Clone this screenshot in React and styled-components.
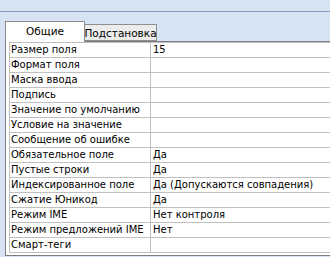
import React from "react";
import styled, { createGlobalStyle } from "styled-components";

const GlobalStyle = createGlobalStyle`
  html, body {
    margin: 0;
    padding: 0;
    background: #d5e3f3;
  }
`;

const rows = [
  ["Размер поля", "15"],
  ["Формат поля", ""],
  ["Маска ввода", ""],
  ["Подпись", ""],
  ["Значение по умолчанию", ""],
  ["Условие на значение", ""],
  ["Сообщение об ошибке", ""],
  ["Обязательное поле", "Да"],
  ["Пустые строки", "Да"],
  ["Индексированное поле", "Да (Допускаются совпадения)"],
  ["Сжатие Юникод", "Да"],
  ["Режим IME", "Нет контроля"],
  ["Режим предложений IME", "Нет"],
  ["Смарт-теги", ""],
];

function App() {
  return (
    <Page>
      <GlobalStyle />
      <TopBar />
      <TabStrip>
        <Tab active>Общие</Tab>
        <Tab>Подстановка</Tab>
      </TabStrip>
      <Panel>
        <Grid>
          {rows.map(([label, value]) => (
            <Row key={label}>
              <Label>{label}</Label>
              <Value>{value}</Value>
            </Row>
          ))}
        </Grid>
      </Panel>
    </Page>
  );
}

export default App;

const Page = styled.div`
  width: 330px;
  height: 257px;
  overflow: hidden;
  background: #d5e3f3;
  font-family: "DejaVu Sans", Tahoma, sans-serif;
  font-size: 10px;
  color: #000;
`;

const TopBar = styled.div`
  height: 11px;
  border-bottom: 1px solid #7f9cc0;
`;

const TabStrip = styled.div`
  display: flex;
  align-items: flex-end;
  padding: 9px 0 0 5px;
  height: 20px;
  position: relative;
  z-index: 1;
`;

const Tab = styled.div`
  box-sizing: border-box;
  height: ${({ active }) => (active ? "21px" : "17px")};
  width: ${({ active }) => (active ? "80px" : "73px")};
  margin-left: ${({ active }) => (active ? "0" : "-1px")};
  margin-bottom: ${({ active }) => (active ? "-1px" : "0")};
  border: 1px solid #8e8f8f;
  border-bottom: ${({ active }) => (active ? "none" : "1px solid #8e8f8f")};
  background: ${({ active }) => (active ? "#fff" : "#ececec")};
  display: flex;
  align-items: ${({ active }) => (active ? "flex-start" : "center")};
  justify-content: center;
  padding-top: ${({ active }) => (active ? "3px" : "0")};
  font-size: 10.5px;
  white-space: nowrap;
`;

const Panel = styled.div`
  margin-left: 5px;
  width: 340px;
  height: 215px;
  box-sizing: border-box;
  border: 1px solid #7d7d7d;
  background: #fff;
  padding: 0 0 0 3px;
`;

const Grid = styled.div`
  border-top: 1px solid #c0c0c0;
  border-left: 1px solid #c0c0c0;
`;

const Row = styled.div`
  display: grid;
  grid-template-columns: 141px 1fr;
  height: 15px;
  box-sizing: border-box;
  border-bottom: 1px solid #c0c0c0;
`;

const Label = styled.div`
  border-right: 1px solid #c0c0c0;
  padding-left: 1px;
  line-height: 14px;
  white-space: nowrap;
  overflow: hidden;
`;

const Value = styled.div`
  padding-left: 2px;
  line-height: 14px;
  white-space: nowrap;
`;
